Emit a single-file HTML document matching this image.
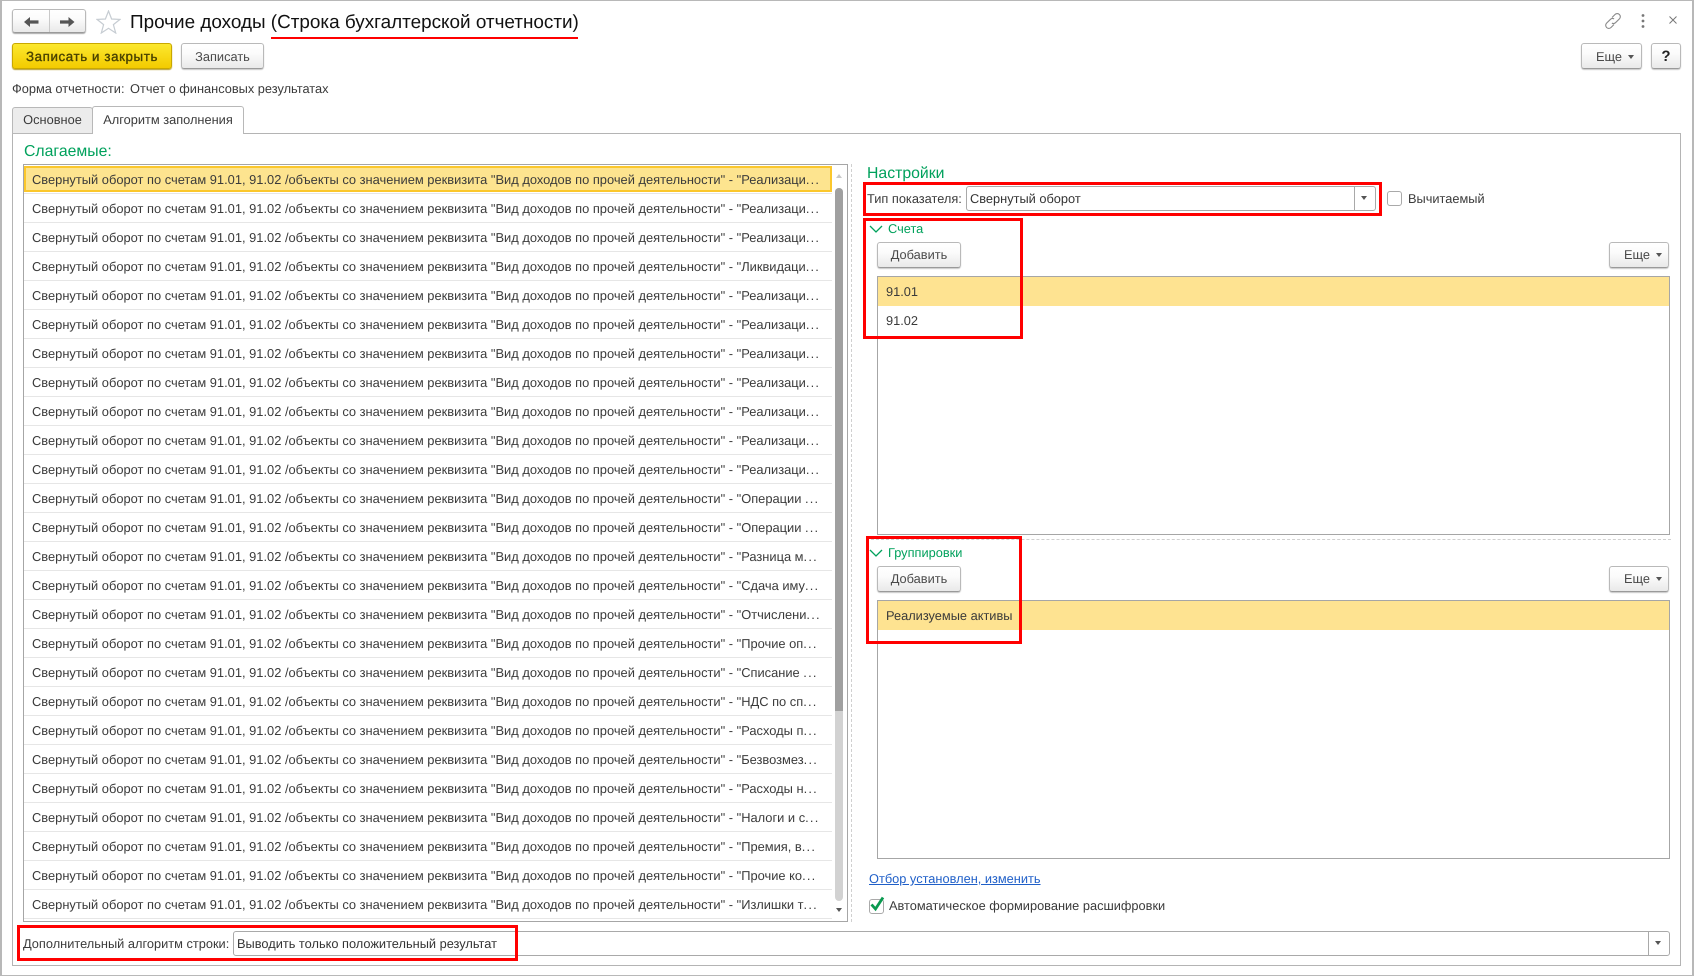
<!DOCTYPE html>
<html lang="ru"><head><meta charset="utf-8"><title>Прочие доходы</title>
<style>
html,body{margin:0;padding:0;background:#fff}
#p{position:relative;width:1695px;height:978px;overflow:hidden;background:#fff;font-family:"Liberation Sans",Arial,sans-serif;font-size:12.8px;color:#3a3a3a;text-rendering:geometricPrecision}
#p div,#p span,#p a{position:absolute;box-sizing:border-box;white-space:nowrap}
.t{line-height:20px;height:20px}
.btn{border:1px solid #b9b9b9;border-bottom-color:#9a9a9a;border-radius:3px;background:linear-gradient(#fff 0%,#fbfbfb 40%,#e9e9e9 100%);box-shadow:0 1px 1px #c8c8c8;text-align:center;line-height:25px;color:#4a4a4a;height:26px}
.tb{border:1px solid #a6a6a6;background:#fff}
.y{background:#fee391}
.g{color:#00a15c}
.r{left:32px;width:802px;line-height:20px;height:20px;color:#3a3a3a;font-size:12.88px;overflow:hidden}
.r i{font-style:normal;letter-spacing:1.2px}
.s{left:24px;width:808px;height:1px;background:#e6e6e6}
.red{border:3px solid #f00;background:transparent}
.inp{border:1px solid #a9a9a9;border-radius:3px;background:#fff}
.ar{width:0;height:0;border-left:3.5px solid transparent;border-right:3.5px solid transparent;border-top:4px solid #555}
</style></head><body>
<div id="p">
<div style="left:0;top:0;width:1694px;height:976px;border:1px solid #b8b8b8;border-left-width:2px;border-right-width:2px"></div>

<div class="btn" style="left:12px;top:9px;width:74px;height:24px;box-shadow:0 1px 1px #aaa"></div>
<div style="left:49px;top:10px;width:1px;height:22px;background:#c9c9c9"></div>
<svg style="position:absolute;left:24px;top:15px" width="15" height="14" viewBox="0 0 15 14"><path d="M0 7 L6 2 V5.4 H14.5 V8.6 H6 V12 Z" fill="#555"/></svg>
<svg style="position:absolute;left:60px;top:15px" width="15" height="14" viewBox="0 0 15 14"><path d="M14.5 7 L8.5 2 V5.4 H0 V8.6 H8.5 V12 Z" fill="#555"/></svg>
<svg style="position:absolute;left:96px;top:10px" width="25" height="24" viewBox="0 0 25 24"><path d="M12.5 1 L15.6 9 L24 9.4 L17.4 14.6 L19.7 23 L12.5 18.3 L5.3 23 L7.6 14.6 L1 9.4 L9.4 9 Z" fill="#fff" stroke="#c6ccd2" stroke-width="1.2"/></svg>
<div style="left:130px;top:10px;height:26px;line-height:26px;font-size:18.9px;color:#111">Прочие доходы (Строка бухгалтерской отчетности)</div>
<div style="left:271px;top:37px;width:307px;height:2px;background:#f00"></div>

<svg style="position:absolute;left:1604px;top:12px" width="18" height="18" viewBox="0 0 18 18" fill="none" stroke="#8a8a8a" stroke-width="1.1"><path d="M8 5.5 L11 2.5 a3 3 0 0 1 4.4 4.4 L11.5 10.7 a3 3 0 0 1 -3.6 .4"/><path d="M10 12.5 L7 15.5 a3 3 0 0 1 -4.4 -4.4 L6.5 7.3 a3 3 0 0 1 3.6 -.4"/></svg>
<svg style="position:absolute;left:1640px;top:13px" width="6" height="16" viewBox="0 0 6 16" fill="#777"><circle cx="3" cy="2.5" r="1.4"/><circle cx="3" cy="8" r="1.4"/><circle cx="3" cy="13.5" r="1.4"/></svg>
<svg style="position:absolute;left:1669px;top:16px" width="8" height="8" viewBox="0 0 8 8" stroke="#777" stroke-width="1"><path d="M.5 .5 L7.5 7.5 M7.5 .5 L.5 7.5"/></svg>

<div class="btn" style="left:12px;top:43px;width:160px;background:linear-gradient(#fce82e,#f3cb00);border-color:#c9a800;color:#4a4300;box-shadow:0 1px 1px #b8a030;font-size:13.33px;letter-spacing:.6px;-webkit-text-stroke:.35px #4a4300">Записать и закрыть</div>
<div class="btn" style="left:181px;top:43px;width:83px">Записать</div>
<div class="btn" style="left:1581px;top:43px;width:61px;text-align:left;padding-left:14px">Еще</div>
<div class="ar" style="left:1628px;top:55px"></div>
<div class="btn" style="left:1651px;top:43px;width:30px;color:#222;font-size:15px;font-weight:bold">?</div>

<div class="t" style="left:12px;top:79px">Форма отчетности:</div>
<div class="t" style="left:130px;top:79px">Отчет о финансовых результатах</div>

<div style="left:12px;top:133px;width:1669px;height:833px;border:1px solid #b4b4b4"></div>
<div style="left:12px;top:107px;width:81px;height:27px;background:#ececec;border:1px solid #b8b8b8;border-radius:3px 3px 0 0;text-align:center;line-height:24px">Основное</div>
<div style="left:92px;top:106px;width:152px;height:28px;background:#fff;border:1px solid #b8b8b8;border-bottom:0;border-radius:3px 3px 0 0;text-align:center;line-height:26px">Алгоритм заполнения</div>

<div class="g" style="left:24px;top:141px;height:22px;line-height:22px;font-size:15.8px">Слагаемые:</div>

<div class="tb" style="left:23px;top:164px;width:825px;height:758px"></div>
<div style="left:24px;top:166px;width:808px;height:26px;background:#fde48f;border:2px solid #fbc72c"></div>
<div class="r" style="top:170px">Свернутый оборот по счетам 91.01, 91.02 /объекты со значением реквизита "Вид доходов по прочей деятельности" - "Реализаци<i>...</i></div>
<div class="s" style="top:222px"></div><div class="r" style="top:199px">Свернутый оборот по счетам 91.01, 91.02 /объекты со значением реквизита "Вид доходов по прочей деятельности" - "Реализаци<i>...</i></div>
<div class="s" style="top:251px"></div><div class="r" style="top:228px">Свернутый оборот по счетам 91.01, 91.02 /объекты со значением реквизита "Вид доходов по прочей деятельности" - "Реализаци<i>...</i></div>
<div class="s" style="top:280px"></div><div class="r" style="top:257px">Свернутый оборот по счетам 91.01, 91.02 /объекты со значением реквизита "Вид доходов по прочей деятельности" - "Ликвидаци<i>...</i></div>
<div class="s" style="top:309px"></div><div class="r" style="top:286px">Свернутый оборот по счетам 91.01, 91.02 /объекты со значением реквизита "Вид доходов по прочей деятельности" - "Реализаци<i>...</i></div>
<div class="s" style="top:338px"></div><div class="r" style="top:315px">Свернутый оборот по счетам 91.01, 91.02 /объекты со значением реквизита "Вид доходов по прочей деятельности" - "Реализаци<i>...</i></div>
<div class="s" style="top:367px"></div><div class="r" style="top:344px">Свернутый оборот по счетам 91.01, 91.02 /объекты со значением реквизита "Вид доходов по прочей деятельности" - "Реализаци<i>...</i></div>
<div class="s" style="top:396px"></div><div class="r" style="top:373px">Свернутый оборот по счетам 91.01, 91.02 /объекты со значением реквизита "Вид доходов по прочей деятельности" - "Реализаци<i>...</i></div>
<div class="s" style="top:425px"></div><div class="r" style="top:402px">Свернутый оборот по счетам 91.01, 91.02 /объекты со значением реквизита "Вид доходов по прочей деятельности" - "Реализаци<i>...</i></div>
<div class="s" style="top:454px"></div><div class="r" style="top:431px">Свернутый оборот по счетам 91.01, 91.02 /объекты со значением реквизита "Вид доходов по прочей деятельности" - "Реализаци<i>...</i></div>
<div class="s" style="top:483px"></div><div class="r" style="top:460px">Свернутый оборот по счетам 91.01, 91.02 /объекты со значением реквизита "Вид доходов по прочей деятельности" - "Реализаци<i>...</i></div>
<div class="s" style="top:512px"></div><div class="r" style="top:489px">Свернутый оборот по счетам 91.01, 91.02 /объекты со значением реквизита "Вид доходов по прочей деятельности" - "Операции <i>...</i></div>
<div class="s" style="top:541px"></div><div class="r" style="top:518px">Свернутый оборот по счетам 91.01, 91.02 /объекты со значением реквизита "Вид доходов по прочей деятельности" - "Операции <i>...</i></div>
<div class="s" style="top:570px"></div><div class="r" style="top:547px">Свернутый оборот по счетам 91.01, 91.02 /объекты со значением реквизита "Вид доходов по прочей деятельности" - "Разница м<i>...</i></div>
<div class="s" style="top:599px"></div><div class="r" style="top:576px">Свернутый оборот по счетам 91.01, 91.02 /объекты со значением реквизита "Вид доходов по прочей деятельности" - "Сдача иму<i>...</i></div>
<div class="s" style="top:628px"></div><div class="r" style="top:605px">Свернутый оборот по счетам 91.01, 91.02 /объекты со значением реквизита "Вид доходов по прочей деятельности" - "Отчислени<i>...</i></div>
<div class="s" style="top:657px"></div><div class="r" style="top:634px">Свернутый оборот по счетам 91.01, 91.02 /объекты со значением реквизита "Вид доходов по прочей деятельности" - "Прочие оп<i>...</i></div>
<div class="s" style="top:686px"></div><div class="r" style="top:663px">Свернутый оборот по счетам 91.01, 91.02 /объекты со значением реквизита "Вид доходов по прочей деятельности" - "Списание <i>...</i></div>
<div class="s" style="top:715px"></div><div class="r" style="top:692px">Свернутый оборот по счетам 91.01, 91.02 /объекты со значением реквизита "Вид доходов по прочей деятельности" - "НДС по сп<i>...</i></div>
<div class="s" style="top:744px"></div><div class="r" style="top:721px">Свернутый оборот по счетам 91.01, 91.02 /объекты со значением реквизита "Вид доходов по прочей деятельности" - "Расходы п<i>...</i></div>
<div class="s" style="top:773px"></div><div class="r" style="top:750px">Свернутый оборот по счетам 91.01, 91.02 /объекты со значением реквизита "Вид доходов по прочей деятельности" - "Безвозмез<i>...</i></div>
<div class="s" style="top:802px"></div><div class="r" style="top:779px">Свернутый оборот по счетам 91.01, 91.02 /объекты со значением реквизита "Вид доходов по прочей деятельности" - "Расходы н<i>...</i></div>
<div class="s" style="top:831px"></div><div class="r" style="top:808px">Свернутый оборот по счетам 91.01, 91.02 /объекты со значением реквизита "Вид доходов по прочей деятельности" - "Налоги и с<i>...</i></div>
<div class="s" style="top:860px"></div><div class="r" style="top:837px">Свернутый оборот по счетам 91.01, 91.02 /объекты со значением реквизита "Вид доходов по прочей деятельности" - "Премия, в<i>...</i></div>
<div class="s" style="top:889px"></div><div class="r" style="top:866px">Свернутый оборот по счетам 91.01, 91.02 /объекты со значением реквизита "Вид доходов по прочей деятельности" - "Прочие ко<i>...</i></div>
<div class="s" style="top:918px"></div><div class="r" style="top:895px">Свернутый оборот по счетам 91.01, 91.02 /объекты со значением реквизита "Вид доходов по прочей деятельности" - "Излишки т<i>...</i></div>
<div class="s" style="top:193px"></div>

<div style="left:835px;top:188px;width:8px;height:713px;background:#d2d2d2;border-radius:4px"></div>
<div style="left:835px;top:188px;width:8px;height:523px;background:#a0a0a0;border-radius:4px 4px 0 0"></div>
<div style="left:836px;top:174px;width:0;height:0;border-left:3.5px solid transparent;border-right:3.5px solid transparent;border-bottom:4px solid #c8c8c8"></div>
<div class="ar" style="left:836px;top:908px"></div>

<div style="left:851px;top:164px;width:0;height:758px;border-left:1px dashed #d0d0d0"></div>

<div class="g" style="left:867px;top:164px;height:20px;line-height:20px;font-size:15.8px">Настройки</div>
<div class="t" style="left:867px;top:189px">Тип показателя:</div>
<div class="inp" style="left:966px;top:186px;width:410px;height:25px"></div>
<div style="left:1354px;top:187px;width:1px;height:23px;background:#a9a9a9"></div>
<div class="ar" style="left:1361px;top:196px"></div>
<div class="t" style="left:970px;top:189px;color:#333">Свернутый оборот</div>
<div class="inp" style="left:1387px;top:191px;width:15px;height:15px"></div>
<div class="t" style="left:1408px;top:189px">Вычитаемый</div>

<svg style="position:absolute;left:869px;top:224px" width="14" height="10" viewBox="0 0 14 10" fill="none" stroke="#00a15c" stroke-width="1.3"><path d="M1 2 L7 8 L13 2"/></svg>
<div class="t g" style="left:888px;top:219px">Счета</div>
<div class="btn" style="left:877px;top:242px;width:84px;line-height:24px">Добавить</div>
<div class="btn" style="left:1609px;top:242px;width:60px;text-align:left;padding-left:14px;line-height:24px">Еще</div>
<div class="ar" style="left:1656px;top:253px"></div>
<div class="tb" style="left:877px;top:276px;width:793px;height:259px"></div>
<div class="y" style="left:878px;top:277px;width:791px;height:29px"></div>
<div class="t" style="left:886px;top:282px">91.01</div>
<div class="t" style="left:886px;top:311px">91.02</div>

<div style="left:866px;top:539px;width:805px;height:0;border-top:1px dashed #d0d0d0"></div>

<svg style="position:absolute;left:869px;top:548px" width="14" height="10" viewBox="0 0 14 10" fill="none" stroke="#00a15c" stroke-width="1.3"><path d="M1 2 L7 8 L13 2"/></svg>
<div class="t g" style="left:888px;top:543px">Группировки</div>
<div class="btn" style="left:877px;top:566px;width:84px;line-height:24px">Добавить</div>
<div class="btn" style="left:1609px;top:566px;width:60px;text-align:left;padding-left:14px;line-height:24px">Еще</div>
<div class="ar" style="left:1656px;top:577px"></div>
<div class="tb" style="left:877px;top:600px;width:793px;height:259px"></div>
<div class="y" style="left:878px;top:601px;width:791px;height:29px"></div>
<div class="t" style="left:886px;top:606px">Реализуемые активы</div>

<a class="t" href="#" style="left:869px;top:869px;color:#1f5fc8;text-decoration:underline">Отбор установлен, изменить</a>
<div class="inp" style="left:869px;top:899px;width:15px;height:15px"></div>
<svg style="position:absolute;left:869px;top:896px" width="16" height="16" viewBox="0 0 16 16" fill="none" stroke="#0a9a50" stroke-width="2.8"><path d="M2.5 8.5 L6.5 13 L14 1.5"/></svg>
<div class="t" style="left:889px;top:896px">Автоматическое формирование расшифровки</div>

<div class="t" style="left:23px;top:934px">Дополнительный алгоритм строки:</div>
<div class="inp" style="left:233px;top:931px;width:1437px;height:25px"></div>
<div style="left:1648px;top:932px;width:1px;height:23px;background:#a9a9a9"></div>
<div class="ar" style="left:1655px;top:941px"></div>
<div class="t" style="left:237px;top:934px;color:#333">Выводить только положительный результат</div>

<div class="red" style="left:863px;top:182px;width:519px;height:34px"></div>
<div class="red" style="left:863px;top:218px;width:160px;height:121px"></div>
<div class="red" style="left:866px;top:536px;width:156px;height:108px"></div>
<div class="red" style="left:17px;top:925px;width:501px;height:36px"></div>
</div>
</body></html>
